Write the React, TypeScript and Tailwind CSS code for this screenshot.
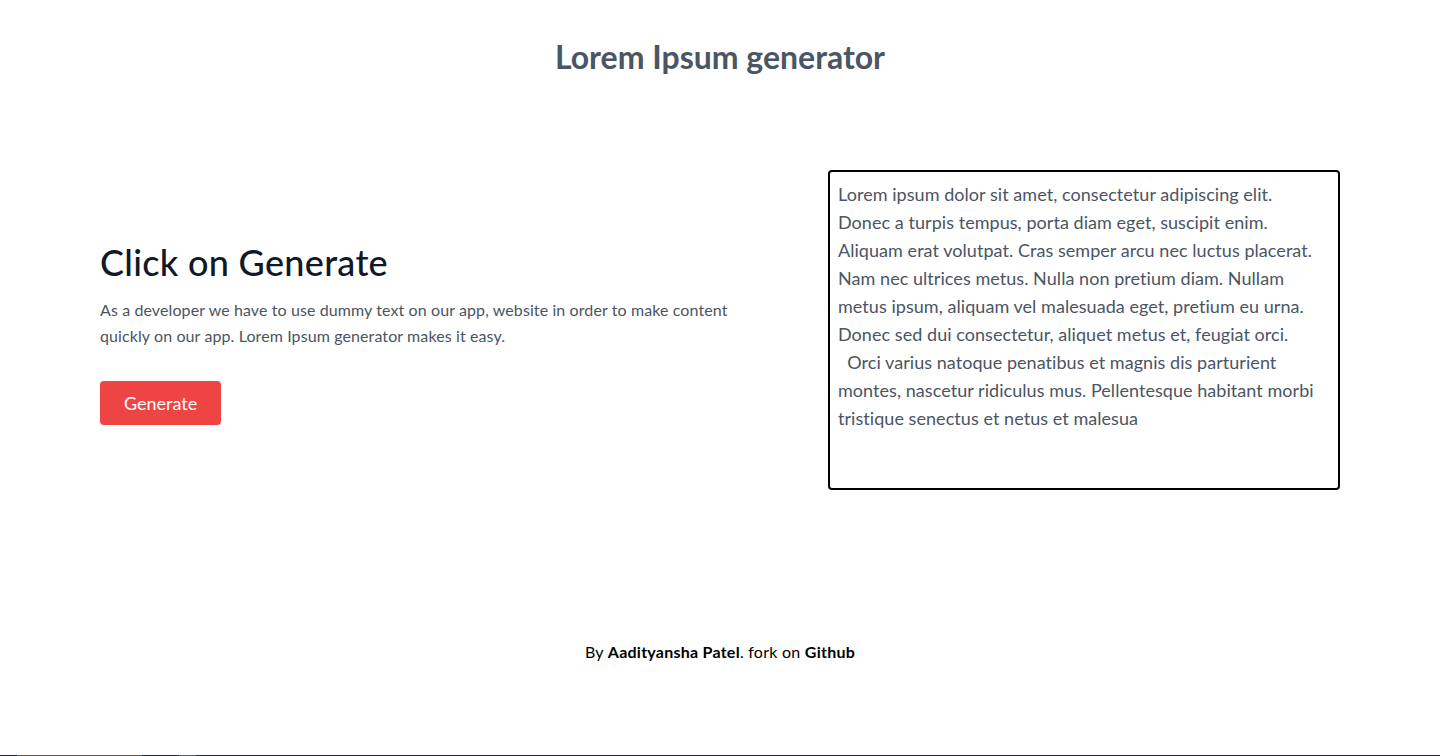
import React from "react";

const loremLines = [
  "Lorem ipsum dolor sit amet, consectetur adipiscing elit.",
  "Donec a turpis tempus, porta diam eget, suscipit enim.",
  "Aliquam erat volutpat. Cras semper arcu nec luctus placerat.",
  "Nam nec ultrices metus. Nulla non pretium diam. Nullam",
  "metus ipsum, aliquam vel malesuada eget, pretium eu urna.",
  "Donec sed dui consectetur, aliquet metus et, feugiat orci.",
  "  Orci varius natoque penatibus et magnis dis parturient",
  "montes, nascetur ridiculus mus. Pellentesque habitant morbi",
  "tristique senectus et netus et malesua",
];

export default function App() {
  return (
    <div
      className="h-[756px] flex flex-col bg-white overflow-hidden"
      style={{ fontFamily: "Lato, 'Liberation Sans', sans-serif" }}
    >
      <header className="pt-[38px] flex justify-center">
        <h1 className="text-[32px] leading-[38px] font-bold text-[#4b5563]">Lorem Ipsum generator</h1>
      </header>

      <main className="mt-[94px] flex items-center px-[100px]">
        <div className="flex-1 pr-24 flex flex-col items-start">
          <h2 className="text-4xl font-medium text-[#111827] mb-4 tracking-[0.3px]">Click on Generate</h2>
          <p className="text-base leading-relaxed text-[#4b5563] mb-8 tracking-[0.1px] -mt-px">
            As a developer we have to use dummy text on our app, website in order to make content
            quickly on our app. Lorem Ipsum generator makes it easy.
          </p>
          <button className="text-lg text-white bg-[#ef4444] py-2 px-6 rounded">Generate</button>
        </div>
        <div className="w-[512px] pb-[6px]">
          <textarea
            readOnly
            className="block w-[512px] h-[320px] border-2 border-black rounded p-2 text-lg leading-7 text-[#4b5563] resize-none overflow-hidden outline-none tracking-[0.05px]"
            style={{ fontFamily: "Lato, 'Liberation Sans', sans-serif" }}
            value={loremLines.join("\n")}
          />
        </div>
      </main>

      <footer className="mt-[144px] flex justify-center">
        <p className="text-base text-black tracking-[0.25px]">
          By <a className="font-bold text-black">Aadityansha Patel</a>. fork on{" "}
          <a className="font-bold text-black">Github</a>
        </p>
      </footer>

      <div className="flex-1" />
      <div className="flex h-px">
        <div className="w-[17px] bg-[#1c2a30]" />
        <div className="w-[125px] bg-[#5b5654]" />
        <div className="w-[37px] bg-[#1c2a30]" />
        <div className="w-[17px] bg-[#56626a]" />
        <div className="flex-1 bg-[#1c2a30]" />
      </div>
    </div>
  );
}
